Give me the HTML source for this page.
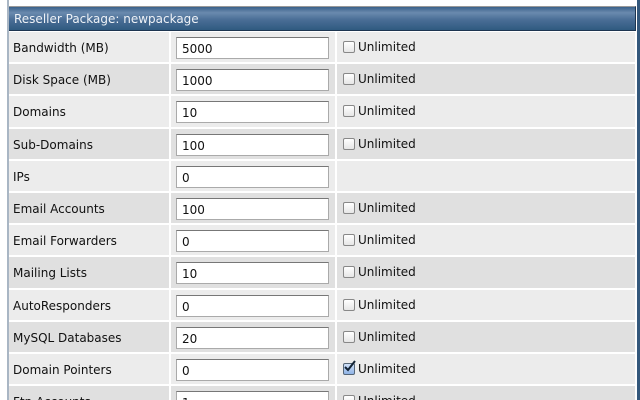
<!DOCTYPE html><html><head><style>
html,body{margin:0;width:640px;height:400px;overflow:hidden}
body{background:#fff;position:relative;font-family:"DejaVu Sans",Verdana,sans-serif;font-size:12px;color:#111}
.lb{position:absolute;left:7px;top:0;width:2px;height:400px;background:#a9b6c4}
.rb{position:absolute;left:637px;top:0;width:3px;height:400px;background:#34587c}
.hd{position:absolute;left:9px;top:6px;width:627px;height:25px;border-top:1px solid #999;border-bottom:1px solid #1d3550;background:linear-gradient(#3a628a 0%,#6a8aae 25%,#4a6e96 55%,#2f5a80 100%);color:#eef2f7;box-sizing:border-box;padding:5px 0 0 5px;border-right:1px solid #1d3550}
.r{position:absolute;left:9px;width:626px;height:30.2px}
.r div{position:absolute;top:0;height:100%}
.a{left:0;width:160px;padding-left:4px;line-height:32px;box-sizing:border-box}
.b{left:162px;width:164px}
.c{left:328px;width:298px}
.i{position:absolute;left:5px;top:5px;width:153px;height:22px;box-sizing:border-box;background:#fff;border:1px solid #aaa;border-top-color:#777;padding:4px 0 0 5px;line-height:15px}
.k{position:absolute;left:6px;top:9px;width:12px;height:12px;border:1px solid #888;border-radius:2px;background:linear-gradient(#fff,#e6e6e6);box-sizing:border-box}
.u{position:absolute;left:21px;top:0;line-height:31px}
</style></head><body>
<div class="lb"></div><div class="rb"></div>
<div class="hd">Reseller Package: newpackage</div>
<div id="t"></div>
<script>
var d=[["Bandwidth (MB)","5000",1],["Disk Space (MB)","1000",1],["Domains","10",1],["Sub-Domains","100",1],["IPs","0",0],["Email Accounts","100",1],["Email Forwarders","0",1],["Mailing Lists","10",1],["AutoResponders","0",1],["MySQL Databases","20",1],["Domain Pointers","0",2],["Ftp Accounts","1",1]];
var h="";d.forEach(function(x,n){var bg=n%2?"#e0e0e0":"#ececec";var top=32+n*32.2;
h+='<div class="r" style="top:'+top+'px"><div class="a" style="background:'+bg+'">'+x[0]+'</div><div class="b" style="background:'+bg+'"><span class="i">'+x[1]+'</span></div><div class="c" style="background:'+bg+'">'+
(x[2]?'<span class="k"'+(x[2]==2?' style="background:linear-gradient(#cfe0f7,#8fb3e6);border-color:#567"':'')+'>'+(x[2]==2?'<svg width="13" height="13" style="position:absolute;left:0;top:-4px"><path d="M1 7 L4 10 L11 1" stroke="#123" stroke-width="2" fill="none"/></svg>':'')+'</span><span class="u">Unlimited</span>':'')+'</div></div>';});
document.getElementById("t").innerHTML=h;
</script>
</body></html>
